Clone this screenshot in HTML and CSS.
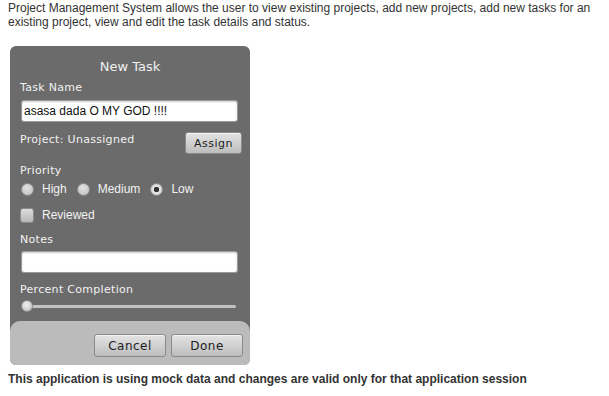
FILE: index.html
```html
<!DOCTYPE html>
<html lang="en">

<head>
    <meta charset="UTF-8">
    <title>Project Management System</title>
    <link rel="stylesheet" href="styles.css">
</head>

<body>
    <p class="intro">Project Management System allows the user to view existing projects, add new projects, add new tasks for an existing project, view and edit the task details and status.</p>

    <div class="panel">
        <div class="panel-body">
            <div class="title">New Task</div>

            <div class="label">Task Name</div>
            <div class="field">asasa dada O MY GOD !!!!</div>

            <div class="project-row">
                <span class="label">Project: Unassigned</span>
                <button class="btn btn-assign">Assign</button>
            </div>

            <div class="label label-priority">Priority</div>
            <div class="radio-row">
                <span class="radio"></span><span class="opt">High</span>
                <span class="radio"></span><span class="opt">Medium</span>
                <span class="radio checked"></span><span class="opt">Low</span>
            </div>

            <div class="check-row">
                <span class="check"></span><span class="opt">Reviewed</span>
            </div>

            <div class="label label-notes">Notes</div>
            <div class="field field-notes"></div>

            <div class="label label-percent">Percent Completion</div>
            <div class="slider">
                <div class="track"></div>
                <div class="thumb"></div>
            </div>
        </div>

        <div class="footer">
            <button class="btn btn-footer">Cancel</button>
            <button class="btn btn-footer">Done</button>
        </div>
    </div>

    <p class="note">This application is using mock data and changes are valid only for that application session</p>
</body>

</html>
```

FILE: styles.css
```css
body {
    margin: 0;
    padding: 1px 8px 0 8px;
    font-family: "Liberation Sans", Arial, sans-serif;
    font-size: 12px;
    color: #333;
    background: #fff;
}

.intro {
    margin: 0;
    line-height: 14px;
}

.panel {
    margin: 17px 0 0 2px;
    width: 240px;
    background: #6b6b6b;
    border-radius: 6px;
    overflow: hidden;
}

.panel-body {
    padding: 11px 10px 9px 10px;
}

.title {
    font-family: "DejaVu Sans", sans-serif;
    font-size: 13px;
    line-height: 20px;
    color: #f0f0f0;
    text-align: center;
}

.label {
    font-family: "DejaVu Sans", sans-serif;
    font-size: 11px;
    line-height: 16px;
    letter-spacing: 0.3px;
    color: #f2f2f2;
    margin-top: 3px;
    margin-bottom: 4px;
}

.field {
    height: 20px;
    margin-left: 1px;
    width: 213px;
    background: #fff;
    border: 1px solid #9a9a9a;
    border-radius: 3px;
    font-size: 12px;
    line-height: 20px;
    color: #111;
    padding: 0 0 0 2px;
    box-shadow: inset 0 1px 2px rgba(0, 0, 0, 0.2);
}

.project-row {
    display: flex;
    justify-content: space-between;
    align-items: center;
    margin-top: 10px;
}

.project-row .label {
    margin: 0 0 6px 0;
}

.btn {
    font-family: "DejaVu Sans", sans-serif;
    font-size: 11px;
    color: #222;
    background: linear-gradient(#e4e4e4, #bdbdbd);
    border: 1px solid #8a8a8a;
    border-radius: 3px;
    padding: 0;
    box-shadow: inset 0 1px 0 rgba(255, 255, 255, 0.6);
}

.btn-assign {
    width: 57px;
    height: 22px;
    margin-right: -2px;
    letter-spacing: 0.5px;
}

.label-priority {
    margin-top: 9px;
    margin-bottom: 2px;
}

.radio-row,
.check-row {
    display: flex;
    align-items: center;
    height: 16px;
}

.radio {
    flex: none;
    width: 13px;
    height: 13px;
    border-radius: 50%;
    margin: 0 8px 0 1px;
    background: radial-gradient(circle at 45% 35%, #e4e4e4, #b8b8b8);
    border: 1px solid #909090;
    box-sizing: border-box;
}

.radio + .opt + .radio {
    margin-left: 10px;
}

.radio.checked {
    background: radial-gradient(circle, #333 0, #333 2.5px, #e6e6e6 3px, #c4c4c4);
}

.opt {
    color: #f2f2f2;
    font-size: 12px;
    line-height: 16px;
}

.check-row {
    margin-top: 10px;
}

.check {
    flex: none;
    width: 14px;
    height: 15px;
    margin: 0 8px 0 0;
    border: 1px solid #8c8c8c;
    border-radius: 3px;
    box-sizing: border-box;
    background: linear-gradient(#dcdcdc, #b8b8b8);
}

.label-notes {
    margin-top: 9px;
    margin-bottom: 3px;
}

.field-notes {
    margin-left: 1px;
}

.label-percent {
    margin-top: 9px;
    margin-bottom: 2px;
}

.slider {
    position: relative;
    height: 12px;
    margin-left: 1px;
}

.track {
    position: absolute;
    left: 2px;
    right: 4px;
    top: 5px;
    height: 3px;
    border-radius: 2px;
    background: #c2c2c2;
}

.thumb {
    position: absolute;
    left: 0;
    top: 0;
    width: 12px;
    height: 12px;
    border-radius: 50%;
    box-sizing: border-box;
    border: 1px solid #8c8c8c;
    background: radial-gradient(circle at 45% 35%, #eee, #bcbcbc);
}

.footer {
    background: #bbb;
    border-radius: 10px 10px 0 0;
    height: 44px;
    display: flex;
    justify-content: flex-end;
    align-items: flex-start;
    gap: 5px;
    padding: 13px 7px 0 0;
    box-sizing: border-box;
}

.btn-footer {
    width: 72px;
    height: 23px;
    font-size: 12px;
    letter-spacing: 0.5px;
}

.note {
    margin: 7px 0 0 0;
    font-weight: bold;
    line-height: 14px;
    color: #333;
}
```
